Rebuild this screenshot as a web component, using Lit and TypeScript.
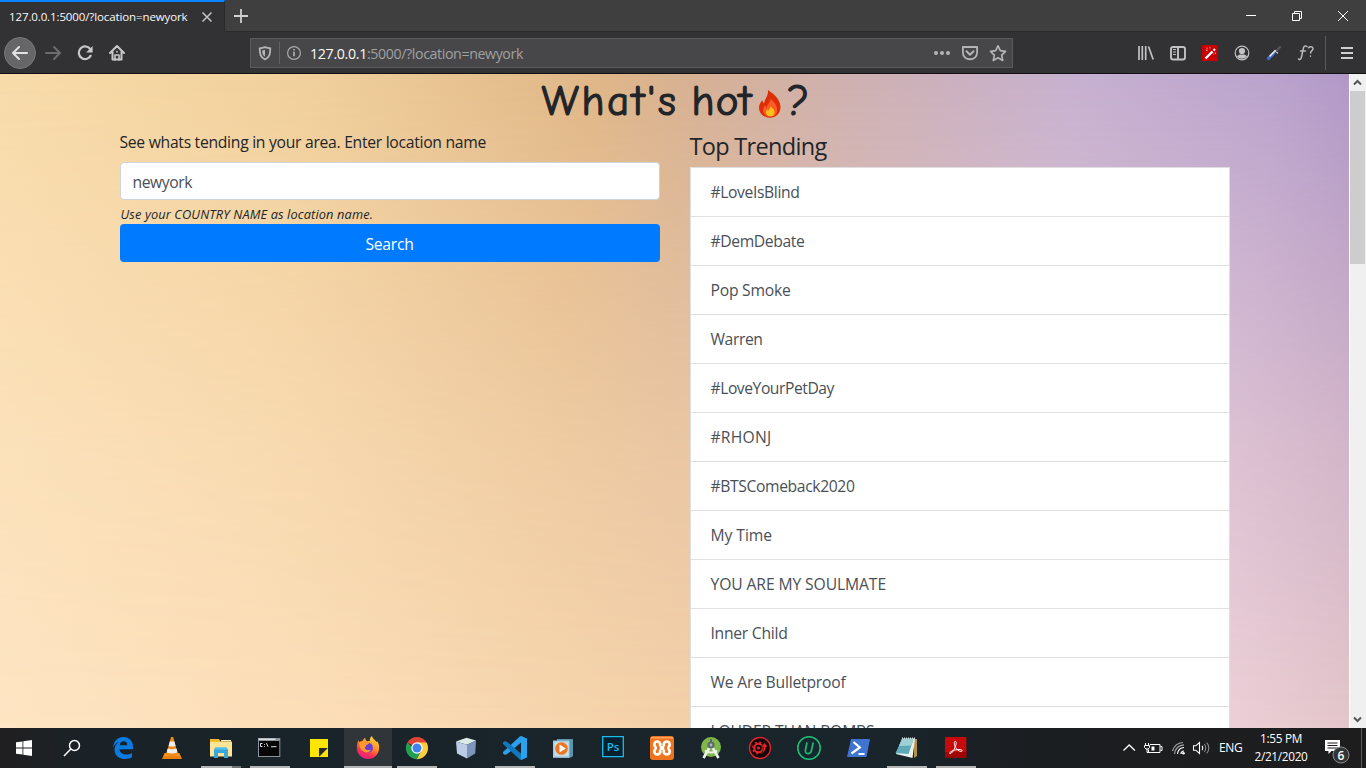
import { LitElement, html, css, svg } from "lit";
import { customElement, property } from "lit/decorators.js";

/** A line of text whose tracking is adjusted so that it spans a given width. */
@customElement("text-run")
class TextRun extends LitElement {
  @property({ type: Number }) w = 0;
  @property() text = "";
  static styles = css`
    :host { display: inline-block; white-space: pre; }
    .run { display: inline-block; white-space: pre; }
  `;
  render() {
    return html`<span class="run">${this.text}</span>`;
  }
  updated() {
    const run = this.renderRoot.querySelector(".run") as HTMLElement;
    run.style.letterSpacing = "0px";
    const natural = run.getBoundingClientRect().width;
    if (this.w && natural) {
      run.style.letterSpacing = `${(this.w - natural) / Math.max(1, this.text.length)}px`;
    }
  }
}

const t = (text: string, w: number) => html`<text-run .text=${text} .w=${w}></text-run>`;

const trends: [string, number][] = [
  ["#LoveIsBlind", 89],
  ["#DemDebate", 94],
  ["Pop Smoke", 80],
  ["Warren", 52],
  ["#LoveYourPetDay", 123.500],
  ["#RHONJ", 61],
  ["#BTSComeback2020", 144],
  ["My Time", 61.500],
  ["YOU ARE MY SOULMATE", 175.500],
  ["Inner Child", 77],
  ["We Are Bulletproof", 135],
  ["LOUDER THAN BOMBS", 164],
];

const apps: { state?: string; art: unknown }[] = [
  { // Edge
    art: svg`<path fill="#0a7be0" d="M14 19.5C14.6 13 19 9 24.3 9c6 0 9.700 4.300 9.700 10v2.200H20.500c.2 3.600 3.200 5.300 6.600 5.300 2.300 0 4.200-.6 5.900-1.600v4.400C31 30.500 28.600 31 26 31c-6.300 0-10.500-3.800-10.500-9.300 0-3.400 1.800-6.300 4.700-8-2.700.7-4.800 2.900-6.200 5.800zm6.700-2.300h7.600c0-2.600-1.300-4-3.600-4-2.100 0-3.600 1.500-4 4z"/>`,
  },
  { // VLC
    art: svg`<path fill="#e8820c" d="M16.500 25h15L34 31H14z"/><path fill="#f9a437" d="M17.500 25.500h13l.8 2.500H16.600z"/><path fill="#f08a14" d="M23 9h2.200L30 27c-3 1.500-9 1.500-12 0z"/><path fill="#eee" d="M21.800 13.500h4.600l1.200 4.400c-2.200.8-4.800.8-7 0zM19.700 20.600c2.800 1 6 1 8.800 0l1.100 3.900c-3.500 1.300-7.500 1.300-11 0z"/>`,
  },
  { // Explorer
    state: "grouped",
    art: svg`<path fill="#f5b92e" d="M13 11h9l1.500 2.500H35V28H13z"/><path fill="#ffe596" d="M13 14h22V28.500H13z"/><path fill="#fff0c0" d="M24 12h10v1.500H24z"/><path fill="#3aa7dc" d="M17 21.500l1.500-2h11l1.500 2V30h-4v-5h-6v5h-4z"/><path fill="#54c3f0" d="M18.500 19.500h11l1.500 2H17z"/>`,
  },
  { // Command prompt
    state: "open",
    art: svg`<path fill="#8d9499" d="M12 10h22.300v19H12z"/><path fill="#d9dde0" d="M12.500 10.500h17V12h-17z"/><path fill="#070707" d="M13 13h20.300v15H13z"/><path d="M14.500 15.500v3M14.500 15.500h2M14.500 18.500h2M18.500 16v.8M18.500 18v.8M20.500 15.200l1.500 3.500M25 18.700h5.500" stroke="#ddd" fill="none"/>`,
  },
  { // Sticky notes
    art: svg`<path fill="#ffe600" d="M15 11h18v9l-9 9h-9z"/><path fill="#262a2c" d="M24 20h9l-9 9z"/><path fill="#ffe600" d="M33 20v9h-9z"/>`,
  },
  { // Firefox
    state: "active",
    art: svg`<defs><linearGradient id="ff" x1=".8" y1="0" x2=".3" y2="1"><stop offset="0" stop-color="#ffe23d"/><stop offset=".45" stop-color="#ff8a2b"/><stop offset=".75" stop-color="#fb2f57"/><stop offset="1" stop-color="#e0218f"/></linearGradient></defs>
    <path fill="url(#ff)" d="M14.500 12c.2 1 .6 1.700 1.200 2.200.9-.9 1.800-1.300 3-1.400.6-1.500 1.500-2.400 2.600-3-.1 1.600.4 2.600 1.700 3.400l3-.4c-.5-2 .3-3.900 2-4.900.4 2.200 1.900 3.100 3.200 4.500.6.6 1 1.200 1.300 1.900l.5-1.400c1.600 2.200 2.300 4.300 2.200 7-.2 6-5 11.100-11.200 11.100S12.800 26 12.800 20c0-3 .5-5.500 1.700-8z"/><circle cx="24" cy="19.700" r="4.900" fill="#6b3fd4"/><path fill="#ff9a2c" d="M15.700 14.200c2.500-1.700 5.500-1 7.300.4h2.400c-.4 1.700-1.900 2-3.300 2.500-.2 1.800-.7 2.300-1.500 2.900 1 2.300 3.900 2.600 6.300 1.600-1.200 2.800-4.300 3.500-6.800 2.200-3.600-1.900-5.400-5.400-4.400-9.600z"/>`,
  },
  { // Chrome
    state: "open",
    art: svg`<path fill="#e04434" d="M14.300 14.500a11.200 11.200 0 0 1 19.300 0L24 20z"/><path fill="#fdcc3f" d="M33.600 14.500A11.200 11.200 0 0 1 23.600 31.200L28 22.500 24 14.500z"/><path fill="#219f55" d="M14.300 14.500a11.200 11.200 0 0 0 9.300 16.700L28.500 22.500 24 23z"/><circle cx="24" cy="20" r="5.700" fill="#fff"/><circle cx="24" cy="20" r="4.500" fill="#3f82f0"/>`,
  },
  { // Cube
    art: svg`<path fill="#dcebe6" d="M14 13.500L24.500 9.700 34 12.500l-9 4.300z"/><path fill="#bccbe6" d="M14 13.500l11 3.300V30.500l-10-5z"/><path fill="#7e94bb" d="M25 16.800l9-4.300-.8 13L25 30.500z"/>`,
  },
  { // VS Code
    state: "open",
    art: svg`<path fill="#1b86cf" d="M30 8l6 2.800v18.400L30 32z"/><path fill="#2aa0ee" d="M30 8.200v6.300L16.500 25.800 14 27l-2-1.500v-1.400L29 8.200z"/><path fill="#1178be" d="M30 31.800v-6.300L16.500 14.200 14 13l-2 1.500v1.400l17 15.900z"/><path fill="#2ba2ef" d="M30 8l6 2.800v18.400L30 32z"/>`,
  },
  { // Media player
    art: svg`<path fill="#5d92ad" d="M17 11h16v17l-2 1.500H17z"/><path fill="#a9cddd" d="M13 12.500h16.500v17.300H13z"/><path fill="#c5dfe9" d="M14.500 14h14v14h-14z"/><circle cx="21.500" cy="20.500" r="6.300" fill="#ee7620"/><path fill="#fff" d="M19.500 16.500l6.300 4-6.300 4z"/>`,
  },
  { // Photoshop
    art: svg`<path fill="#06202e" stroke="#17bdf0" stroke-width="1.300" d="M13.700 8.700h20.600v20H13.700z"/><text x="24" y="23" text-anchor="middle" font-family="Open Sans, sans-serif" font-size="11.500" font-weight="600" fill="#17bdf0">Ps</text>`,
  },
  { // XAMPP
    art: svg`<rect x="12" y="8" width="24" height="24" rx="3" fill="#f0741e"/><path fill="#f9a25c" d="M13 9h22v1.500H13z"/><path fill="#fff" d="M21 18h6v4h-6z"/><g fill="none" stroke="#fff" stroke-width="2.700"><circle cx="19.300" cy="16.500" r="3"/><circle cx="28.700" cy="16.500" r="3"/><circle cx="19.300" cy="23.500" r="3"/><circle cx="28.700" cy="23.500" r="3"/></g><path fill="#f0741e" d="M18.200 17.500h2.800l1 2.500-1 2.500h-2.800l1-2.500zM29.800 17.500H27L26 20l1 2.500h2.800l-1-2.500z"/><path fill="#fff" d="M22 18.500h4v3h-4z"/>`,
  },
  { // Android Studio
    art: svg`<circle cx="24" cy="19" r="10" fill="#7fb848"/><path d="M24 17l-7.500 13M24 17l7.500 13" stroke="#f1f1f1" stroke-width="2.600"/><path d="M18 22.500c3.500 2.800 8.500 2.800 12 0" fill="none" stroke="#f1f1f1" stroke-width="2"/><circle cx="24" cy="17" r="3.600" fill="#5c6a6d"/><circle cx="24" cy="17" r="1.400" fill="#aebdb0"/><path fill="#5c6a6d" d="M23 11h2v3h-2z"/>`,
  },
  { // Red gear
    art: svg`<circle cx="24" cy="20" r="10.500" fill="#120808" stroke="#e8242a" stroke-width="1.300"/><circle cx="22.500" cy="20" r="4.300" fill="none" stroke="#e8242a" stroke-width="2"/><circle cx="22.500" cy="20" r="5.700" fill="none" stroke="#e8242a" stroke-width="1.600" stroke-dasharray="2 2.500"/><circle cx="22.500" cy="20" r="1.500" fill="#e8242a"/><path fill="#e8242a" stroke="#120808" stroke-width=".6" d="M28.500 14.500l3.500 4.500h-2c0 3-1.500 5.500-5 6.500 2-2 2.400-4 2.200-6.500H25z"/>`,
  },
  { // IObit uninstaller
    art: svg`<circle cx="24" cy="20" r="11.200" fill="#16282f" stroke="#1fc278" stroke-width="1.500"/><path d="M22 14.500l-1.600 7.800c-.5 4.400 5 4.400 6 .3l1.800-8.100" fill="none" stroke="#1fb673" stroke-width="1.800"/>`,
  },
  { // PowerShell
    art: svg`<path fill="#3f74d1" d="M17 11h19l-3.500 18H13z"/><path fill="none" stroke="#fff" stroke-width="2.200" d="M19.500 14l6.300 5.500-8.300 6M24.500 26h6"/>`,
  },
  { // Notepad
    state: "open",
    art: svg`<path fill="#b59146" d="M31 11h3v17l-3 2z"/><path fill="#e9f0ef" d="M19 10.500h13L29.500 30 13 26z"/><path fill="#5fa9b8" d="M19 11.500h11.500L25.500 26 12.500 25z"/><path fill="#9ed0d6" d="M19 11.500h11.500l-2 6-12.500.5z"/><path d="M19 10.300h13" stroke="#cfdad9" stroke-width="1.600" stroke-dasharray="1 1"/>`,
  },
  { // Acrobat
    state: "open",
    art: svg`<path fill="#c80a0a" d="M13 9h21.300v20.500H13z"/><path fill="#a00404" d="M13 24h21.300v5.500H13z"/><path fill="none" stroke="#fff" stroke-width="1" d="M22.800 13.500c1.300-.6 1.700 1 1.200 3-.8 3.300-2.800 7-4.800 8.800-1.200.8-2.100 0-1.300-.9 1.800-1.800 6.500-3.200 10.300-2.900 2.500.2 2.500 1.800.8 1.900-2.600 0-5.900-3.200-6.600-7.200-.2-1.300-.1-2.300.4-2.700z"/>`,
  },
];

@customElement("app-root")
class AppRoot extends LitElement {
  static styles = css`
    :host { display: block; width: 1366px; height: 768px; overflow: hidden; font-family: "Segoe UI", "Open Sans", "Noto Sans", sans-serif; }
    * { box-sizing: border-box; }
    svg { display: block; flex: none; }
    .window { display: flex; flex-direction: column; height: 768px; }

    .tabs { display: flex; height: 32px; background: #3f3f3f; flex: none; border-bottom: 1px solid #2b2b2c; }
    .tab { display: flex; align-items: center; width: 225px; height: 32px; padding: 0 0 0 9px; background: #323234; border-top: 2px solid #0a84ff; border-right: 1px solid #2a2a2b; color: #f9f9fa; font-size: 11.500px; line-height: 16px; }
    .tab .x { margin-left: 12px; }
    .spacer { flex: 1; }
    .caption { width: 46px; height: 32px; }

    .nav { display: flex; align-items: center; height: 42px; flex: none; background: #323234; border-bottom: 1px solid #111113; padding: 0 3px 0 4px; }
    .fwd { margin-left: 1px; }
    .url { display: flex; align-items: center; width: 763px; height: 30px; margin-left: 117px; background: #474749; border: 1px solid #5b5b5d; color: #a0a0a1; font-size: 14.200px; line-height: 20px; }
    .url .host { color: #f9f9fa; }
    .url .addr { padding-left: 2px; display: flex; margin-top: 2px; }
    .vsep { width: 1px; height: 34px; background: #5a5a5c; margin: 0 5px 0 3px; }

    .view { display: flex; height: 654px; flex: none; overflow: hidden; }
    .page { position: relative; width: 1349px; height: 654px; overflow: hidden; color: #212529;
      background: linear-gradient(90deg, #fee5c3 0, #fcdfb9 300px, #f4d1a9 680px, #eecfc0 850px, #edd0d7 1230px, #e4c6cb 1349px); }
    .page::before { content: ""; position: absolute; inset: 0;
      background: linear-gradient(96deg, #f8dba9 0, #f0cf9b 22%, #dfb687 42%, #d6b093 49%, #ceb0b0 60%, #c6b0d0 76%, #b9a2cc 90%, #a98fc3 100%);
      -webkit-mask-image: linear-gradient(180deg, #000 0, rgba(0,0,0,.64) 28%, rgba(0,0,0,.3) 58%, transparent 100%);
      mask-image: linear-gradient(180deg, #000 0, rgba(0,0,0,.64) 28%, rgba(0,0,0,.3) 58%, transparent 100%); }
    .content { position: relative; padding: 0 119.500px; font-size: 15.700px; line-height: 24px; }
    h1 { display: flex; align-items: center; justify-content: center; height: 48px; margin: 0 0 8px; padding: 5px 0 0 1px; font: 400 43px/48px "Comic Sans MS", "Comic Neue", "Open Sans", sans-serif; -webkit-text-stroke: 1.200px #212529; }
    .second { margin-left: 13px; }
    .fire { margin: 6px 6px 0 5px; }
    .cols { display: grid; grid-template-columns: 540px 540px; gap: 30px; align-items: start; }
    .label { height: 24px; margin-bottom: 8px; }
    .input { height: 38px; padding: 7px 12px; background: #fff; border: 1px solid #ced4da; border-radius: 4px; color: #495057; }
    .hint { height: 24px; padding: 3px 0 0 1px; font-size: 12.800px; line-height: 22px; font-style: italic; }
    .btn { display: flex; justify-content: center; height: 38px; padding-top: 8px; background: #007bff; color: #fff; border-radius: 4px; }
    h4 { margin: 0 0 8px; height: 29px; font-weight: 400; font-size: 23.500px; line-height: 30px; padding-top: 1px; }
    .list { border: 1px solid #dfdfdf; background: #fff; color: #495057; }
    .item { height: 49px; padding: 12px 20px; border-bottom: 1px solid #dfdfdf; }

    .scroll { display: flex; flex-direction: column; width: 17px; background: #f0f0f0; border-left: 1px solid #fff; }
    .thumb { width: 15px; height: 173px; background: #cdcdcd; }

    .taskbar { display: flex; height: 40px; flex: none; color: #fff; background: linear-gradient(90deg, #201f20 0, #1a2227 90px, #18242a 300px, #19242b 900px, #1b1e21 1030px, #1d1d1e 1366px); }
    .apps { display: flex; gap: 1px; margin-left: 3px; }
    .app { position: relative; width: 48px; height: 40px; }
    .app.active { background: #2f3538; }
    .app.open::after, .app.grouped::after, .app.active::after { content: ""; position: absolute; left: 4px; right: 4px; bottom: 0; height: 2px; background: #b3b5b6; }
    .app.active::after { left: 0; right: 0; }
    .app.grouped::after { background: linear-gradient(90deg, #b3b5b6 31px, #6d7376 31px); }
    .lang { padding: 10px 0 0; width: 36px; font-size: 12px; line-height: 20px; }
    .clock { display: flex; flex-direction: column; align-items: center; width: 52px; padding-top: 1px; font-size: 11.800px; line-height: 18px; }
    .desk { width: 1px; height: 40px; background: #5c5c5d; margin: 0 4px 0 auto; }
  `;

  private tabBar() {
    return html`<div class="tabs">
      <div class="tab">${t("127.0.0.1:5000/?location=newyork", 178.500)}
        <svg class="x" width="14" height="14" viewBox="0 0 14 14" stroke="#c4c4c5" stroke-width="1.500"><path d="M2.500 2.500l9 9M11.500 2.500l-9 9"/></svg>
      </div>
      <svg width="32" height="32" viewBox="0 0 32 32" stroke="#d0d0d1" stroke-width="1.800"><path d="M16 9v14M9 16h14"/></svg>
      <div class="spacer"></div>
      <svg class="caption" viewBox="0 0 46 32" stroke="#fff"><path d="M18 15.500h10"/></svg>
      <svg class="caption" viewBox="0 0 46 32" stroke="#fff" fill="none"><path d="M18.500 13.500h7v7h-7zM20.500 13v-1.500h7v7H26"/></svg>
      <svg class="caption" viewBox="0 0 46 32" stroke="#fff"><path d="M18 11l10 10M28 11l-10 10"/></svg>
    </div>`;
  }

  private navBar() {
    return html`<div class="nav">
      <svg width="32" height="32" viewBox="0 0 32 32" fill="none" stroke="#e2e2e2" stroke-width="2" stroke-linecap="round" stroke-linejoin="round"><circle cx="16" cy="16" r="15.500" fill="#666668" stroke="#77777a" stroke-width="1"/><path d="M23 16H9.500M15 10l-6 6 6 6"/></svg>
      <svg class="fwd" width="32" height="32" viewBox="0 0 32 32" fill="none" stroke="#6c6c6e" stroke-width="2" stroke-linecap="round" stroke-linejoin="round"><path d="M9 16h13.500M17 10l6 6-6 6"/></svg>
      <svg width="32" height="32" viewBox="0 0 32 32" fill="none" stroke="#c8c8c9" stroke-width="2.200"><path d="M21.500 12.500A6.300 6.300 0 1 0 22 18"/><path d="M23.600 9v6.500h-6.500z" fill="#c8c8c9" stroke="none"/></svg>
      <svg width="32" height="32" viewBox="0 0 32 32" fill="none" stroke="#c8c8c9" stroke-width="2" stroke-linejoin="round" stroke-linecap="round"><path d="M9 16l7-7 7 7M11.500 15v7.500h9V15"/><path d="M14 23v-5h4v5M16 14.500v.5" stroke-width="1.600"/></svg>
      <div class="url">
        <svg width="28" height="28" viewBox="0 0 28 28" fill="none" stroke="#b4b4b5" stroke-width="1.800"><path d="M14 8.200c2 .8 3.800 1.100 5.300 1.100 0 5.500-.6 8.800-5.300 11.200-4.700-2.400-5.300-5.700-5.300-11.200 1.500 0 3.300-.3 5.300-1.100z"/><path fill="#b4b4b5" stroke="none" d="M14 10.800v7c-2.400-1.600-2.800-3.400-2.900-6.300 1 0 2-.3 2.900-.7z"/></svg>
        <svg width="1" height="22" viewBox="0 0 1 22"><path fill="#626264" d="M0 0h1v22H0z"/></svg>
        <svg width="28" height="28" viewBox="0 0 28 28" fill="none" stroke="#a9a9aa" stroke-width="1.200"><circle cx="14" cy="14" r="6.400"/><path d="M14 12.800v4.500M14 10v1.500" stroke-width="1.800"/></svg>
        <div class="addr"><span class="host">${t("127.0.0.1", 57)}</span>${t(":5000/?location=newyork", 156)}</div>
        <div class="spacer"></div>
        <svg width="28" height="28" viewBox="0 0 28 28" fill="#b4b4b5"><circle cx="8" cy="14" r="2"/><circle cx="14" cy="14" r="2"/><circle cx="20" cy="14" r="2"/></svg>
        <svg width="28" height="28" viewBox="0 0 28 28" fill="none" stroke="#b4b4b5" stroke-width="1.800" stroke-linecap="round" stroke-linejoin="round"><path d="M6.900 8h14.200v5.500c0 9-14.200 9-14.200 0z"/><path d="M10.500 12.300l3.500 3.400 3.500-3.400" stroke-width="2"/></svg>
        <svg width="28" height="28" viewBox="0 0 28 28" fill="none" stroke="#b4b4b5" stroke-width="1.700" stroke-linejoin="round"><path d="M14 6.800l2.300 4.900 5.200.7-3.800 3.700 1 5.300-4.700-2.600-4.700 2.600 1-5.300-3.800-3.700 5.200-.7z"/></svg>
      </div>
      <div class="spacer"></div>
      <svg width="32" height="32" viewBox="0 0 32 32" stroke="#c2c2c3" stroke-width="1.700"><path d="M9 9v14M12.300 9v14M15.700 9v14M18.500 9.500l4.700 13"/></svg>
      <svg width="32" height="32" viewBox="0 0 32 32" fill="none" stroke="#c2c2c3" stroke-width="1.900"><rect x="9" y="10" width="14" height="12.500" rx="2"/><path d="M16 10v12.500"/><path d="M11 12.500h3M11 15h3M11 17.500h3" stroke-width="1"/></svg>
      <svg width="32" height="32" viewBox="0 0 32 32"><path fill="#c80000" d="M8 8h16v16H8z"/><path d="M11.500 21.500l7-7" stroke="#fff" stroke-width="2.400"/><path d="M19.500 13.500l1.500-1.500" stroke="#fff" stroke-width="2.200"/><path d="M13 10.500v2M12 13.500h1.500M16 10v1.500M21.500 15.500v1.500M19 17h1" stroke="#e99"/></svg>
      <svg width="32" height="32" viewBox="0 0 32 32" fill="none" stroke="#c2c2c3" stroke-width="1.200"><circle cx="16" cy="16" r="6.800"/><circle cx="16" cy="14" r="3.100" fill="#c2c2c3" stroke="none"/><path fill="#c2c2c3" stroke="none" d="M11 19.500c1-1.700 2.700-2 5-2s4 .3 5 2c-2.500 2.900-7.500 2.900-10 0z"/></svg>
      <svg width="32" height="32" viewBox="0 0 32 32" stroke-linecap="round"><path d="M10.500 21.500l5-5" stroke="#4468c8" stroke-width="3.200"/><path d="M12 19l5.500-5.500" stroke="#e5ecf8" stroke-width="1.600"/><path d="M16.500 13.500l3 2.500" stroke="#c8ccd0" stroke-width="1.200"/><path d="M19 13.500l3-3.500" stroke="#56565a" stroke-width="2.400"/></svg>
      <svg width="32" height="32" viewBox="0 0 32 32" fill="none" stroke="#b9b9ba" stroke-width="1.500" stroke-linecap="round"><path d="M17 9.500c-2-1.400-3.300-.2-3.800 2.500l-1.700 8c-.4 2-1.300 3-3 2M10.500 14h5"/><path d="M18.500 10.800c1-1.500 4.500-1.500 4.500.9 0 2-2.400 1.900-2.400 4.300M20.500 19v.3"/></svg>
      <div class="vsep"></div>
      <svg width="32" height="32" viewBox="0 0 32 32" stroke="#cfcfd0" stroke-width="2"><path d="M10 11h12M10 16h12M10 21h12"/></svg>
    </div>`;
  }

  private page() {
    return html`<div class="page"><div class="content">
      <h1>${t("What's", 137)}<span class="second">${t("hot", 61)}</span>
        <svg class="fire" width="24" height="28" viewBox="0 0 24 28"><path fill="#dd2e07" d="M10 0c5 3.500 12.500 9 12.500 17 0 6.500-4.500 10.700-10.700 10.700S1 23.500 1 18c0-3.500 1.800-6 3.300-7.700.3 1.500.8 2.300 1.700 3C7 8 10.500 6 10 0z"/><path fill="#ff5b26" d="M12.500 9c3.500 3 6.700 6.500 6.700 11 0 4.300-3 6.800-7 6.800s-7-2.500-7-6.500c0-2 1-3.700 2-5 .3 1.500.7 2 1.600 2.600.2-3.500 3.200-5 3.700-8.900z"/><path fill="#fcc216" d="M12.500 16.500c2 1.600 4 3.200 4 5.700 0 2.600-1.800 4-4.200 4S8 24.700 8 22.500c0-1.300.6-2.300 1.200-3 .3.700.6 1.100 1.300 1.300.3-1.600 1.700-2.300 2-4.300z"/></svg>
        ${t("?", 21)}</h1>
      <div class="cols">
        <div>
          <div class="label">${t("See whats tending in your area. Enter location name", 366.500)}</div>
          <div class="input">${t("newyork", 59.500)}</div>
          <div class="hint">${t("Use your COUNTRY NAME as location name.", 252.500)}</div>
          <div class="btn">${t("Search", 48)}</div>
        </div>
        <div>
          <h4>${t("Top Trending", 137)}</h4>
          <div class="list">${trends.map(([name, w]) => html`<div class="item">${t(name, w)}</div>`)}</div>
        </div>
      </div>
    </div></div>`;
  }

  private scrollBar() {
    return html`<div class="scroll">
      <svg width="16" height="17" viewBox="0 0 16 17" fill="none" stroke="#55565a" stroke-width="2"><path d="M4 10.500L7.500 7l3.500 3.500"/></svg>
      <div class="thumb"></div><div class="spacer"></div>
      <svg width="16" height="17" viewBox="0 0 16 17" fill="none" stroke="#55565a" stroke-width="2"><path d="M4 6.500L7.500 10 11 6.500"/></svg>
    </div>`;
  }

  private taskBar() {
    return html`<div class="taskbar">
      <svg width="48" height="40" viewBox="0 0 48 40" fill="#fff"><path d="M16 14.300l6.500-.9v6.200H16zM23.300 13.300L32 12v7.600h-8.700zM16 20.400h6.500v6.200l-6.500-.9zM23.300 20.400H32V28l-8.700-1.300z"/></svg>
      <svg width="48" height="40" viewBox="0 0 48 40" fill="none" stroke="#fff" stroke-width="1.500"><circle cx="26.500" cy="17.500" r="5"/><path d="M22.800 21L16 28"/></svg>
      <div class="apps">${apps.map((a) => html`<div class="app ${a.state ?? ""}"><svg width="48" height="40" viewBox="0 0 48 40">${a.art}</svg></div>`)}</div>
      <div class="spacer"></div>
      <svg width="24" height="40" viewBox="3.500 0 24 40" fill="none" stroke="#fff" stroke-width="1.300"><path d="M8 22.500l5.700-5.500 5.700 5.500"/></svg>
      <svg width="24" height="40" viewBox="3 0 24 40" fill="none" stroke="#fff"><path d="M10 16.500h10v8H8.500v-3M20.500 18.500H22v4h-1.500M5.500 15v2.500M8.500 15v2.500M4.500 17.500h5v2l-1.500 1.500H6l-1.500-1.500zM7 21v3.500h2"/><path fill="#fff" stroke="none" d="M11.500 18.500h3v4h-3z"/></svg>
      <svg width="24" height="40" viewBox="1 0 24 40" fill="none" stroke="#fff" stroke-width="1.200"><path d="M15 26a3 3 0 0 1 3-3M11.500 26a6.500 6.500 0 0 1 6.500-6.500"/><path d="M8.500 26a9.500 9.500 0 0 1 9.500-9.200M6.500 23a12 12 0 0 1 10.500-8.500" stroke="#a5a5a6"/><circle cx="17.500" cy="25.300" r="1.300" fill="#fff" stroke="none"/></svg>
      <svg width="28" height="40" viewBox="1 0 28 40" fill="none" stroke="#fff" stroke-width="1.100"><path d="M3.500 17.800h2.300l3.700-3.300v11l-3.700-3.300H3.500z"/><path d="M12 18c1 1 1 3 0 4"/><path d="M14.300 16.200c2 2 2 5.600 0 7.600M16.600 14.600c3 3 3 7.800 0 10.800" stroke="#8a8a8b"/></svg>
      <div class="lang">${t("ENG", 23.500)}</div>
      <div class="clock">${t("1:55 PM", 42)}${t("2/21/2020", 53)}</div>
      <svg width="54" height="40" viewBox="0 0 54 40"><path fill="#fff" d="M18 12h15v11h-8.500l-3 3v-3H18z"/><path d="M20.500 15h10M20.500 17.500h10M20.500 20h10" stroke="#1d1d1e"/><circle cx="34" cy="27" r="8" fill="#333435" stroke="#8b8b8c"/><text x="34" y="31.500" text-anchor="middle" font-family="Open Sans, sans-serif" font-size="12" font-weight="600" fill="#fff">6</text></svg>
      <div class="desk"></div>
    </div>`;
  }

  render() {
    return html`<div class="window">
      ${this.tabBar()}${this.navBar()}
      <div class="view">${this.page()}${this.scrollBar()}</div>
      ${this.taskBar()}
    </div>`;
  }
}
